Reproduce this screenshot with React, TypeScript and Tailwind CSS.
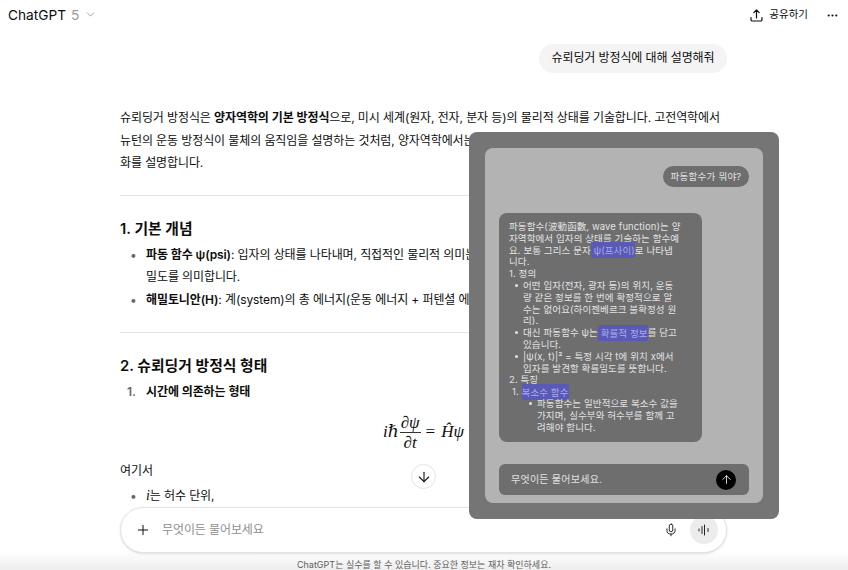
import { ChevronDown, MoreHorizontal, Plus, Mic, ArrowDown, ArrowUp } from "lucide-react";

const font = { fontFamily: '"Inter","Noto Sans CJK KR",sans-serif' };
const math = { fontFamily: '"Liberation Serif","DejaVu Serif",serif' };

function Hl({ children }: { children: React.ReactNode }) {
  return <span className="bg-[#5a5ab4] text-[#a8a8ee] py-[2.5px]">{children}</span>;
}

function Li({ children }: { children: React.ReactNode }) {
  return (
    <li className="flex">
      <span className="w-[14px] shrink-0 pl-[6px] pt-[4px]">
        <span className="block w-[3px] h-[3px] rounded-full bg-[#e2e2e2]" />
      </span>
      <span>{children}</span>
    </li>
  );
}

export default function App() {
  return (
    <div style={font} className="relative w-[848px] h-[570px] overflow-hidden bg-white flex flex-col text-[#0d0d0d]">
      <header className="h-[30px] shrink-0 flex items-center justify-between pl-[8px] pr-[9px]">
        <div className="flex items-center text-[13.7px] gap-[5px]">
          <span>ChatGPT</span>
          <span className="text-[#9b9b9b]">5</span>
          <ChevronDown size={13} strokeWidth={1.5} className="text-[#8f8f8f]" />
        </div>
        <div className="flex items-center">
          <svg width="15" height="15" viewBox="0 0 15 15" fill="none" stroke="#0d0d0d" strokeWidth="1.2" strokeLinecap="round" strokeLinejoin="round">
            <path d="M7.5 10V2M4.8 4.6 7.5 2l2.7 2.6M2 9.5v2.2c0 .8.6 1.3 1.3 1.3h8.4c.7 0 1.3-.5 1.3-1.3V9.5" />
          </svg>
          <span className="text-[10.5px] ml-[5px] mr-[18px]">공유하기</span>
          <MoreHorizontal size={13} strokeWidth={2} />
        </div>
      </header>

      <main className="flex-1 overflow-hidden">
        <div className="w-[607px] ml-[120px] text-[12px] tracking-[-0.1px] leading-[22.5px]">
          <div className="flex justify-end mt-[14px]">
            <div className="h-[29px] w-[188px] rounded-full bg-[#f4f4f4] flex items-center justify-center">슈뢰딩거 방정식에 대해 설명해줘</div>
          </div>
          <div className="mt-[34px] whitespace-nowrap">
            <p>슈뢰딩거 방정식은 <b className="font-semibold">양자역학의 기본 방정식</b>으로, 미시 세계(원자, 전자, 분자 등)의 물리적 상태를 기술합니다. 고전역학에서</p>
            <p>뉴턴의 운동 방정식이 물체의 움직임을 설명하는 것처럼, 양자역학에서는 슈뢰딩거 방정식이 시간 변</p>
            <p>화를 설명합니다.</p>
          </div>
          <hr className="border-[#e5e5e5] mt-[20px]" />
          <h2 className="text-[14.8px] tracking-normal font-semibold mt-[22px] leading-[22px]">1. 기본 개념</h2>
          <ul className="mt-[4px] whitespace-nowrap">
            <li className="flex">
              <span className="w-[26px] pl-[10px] text-[#666]">•</span>
              <div>
                <p><b className="font-semibold">파동 함수 ψ(psi)</b>: 입자의 상태를 나타내며, 직접적인 물리적 의미는 없지만 제곱은 확률</p>
                <p>밀도를 의미합니다.</p>
              </div>
            </li>
            <li className="flex">
              <span className="w-[26px] pl-[10px] text-[#666]">•</span>
              <p><b className="font-semibold">해밀토니안(H)</b>: 계(system)의 총 에너지(운동 에너지 + 퍼텐셜 에너지)를 나타냅니다.</p>
            </li>
          </ul>
          <hr className="border-[#e5e5e5] mt-[21px]" />
          <h2 className="text-[14.8px] tracking-normal font-semibold mt-[22px] leading-[22px]">2. 슈뢰딩거 방정식 형태</h2>
          <div className="flex mt-[4px] font-semibold">
            <span className="w-[26px] pl-[7px] text-[#666]">1.</span>
            <span>시간에 의존하는 형태</span>
          </div>
          <div style={math} className="flex items-center justify-center italic text-[17px] tracking-normal mt-[7px] h-[44px]">
            <span>iℏ</span>
            <span className="flex flex-col items-center mx-[1px] leading-[19px]">
              <span className="border-b border-[#333] px-[1px]">∂ψ</span>
              <span>∂t</span>
            </span>
            <span className="not-italic ml-[4px] mr-[6px]">=</span>
            <span>Ĥψ</span>
          </div>
          <p className="mt-[5px]">여기서</p>
          <div className="flex mt-[3px]">
            <span className="w-[26px] pl-[10px] text-[#666]">•</span>
            <p><i style={math} className="text-[14px]">i</i>는 허수 단위,</p>
          </div>
        </div>
      </main>

      <footer className="h-[63px] shrink-0 bg-gradient-to-b from-white from-70% to-[#eeeeee] relative">
        <div className="h-[46px] w-[607px] ml-[120px] rounded-full border border-[#e3e3e3] bg-white shadow-sm flex items-center pl-[14px] pr-[8px]">
          <Plus size={16} strokeWidth={1.5} />
          <span className="ml-[11px] text-[12px] tracking-[-0.1px] text-[#8f8f8f] flex-1">무엇이든 물어보세요</span>
          <Mic size={14} strokeWidth={1.5} />
          <div className="ml-[12px] w-[28px] h-[28px] rounded-full bg-[#ececec] flex items-center justify-center">
            <svg width="12" height="12" viewBox="0 0 12 12" stroke="#222" strokeWidth="1" strokeLinecap="round">
              <path d="M1 5v2M4 2.5v7M6.5 1v10M10 4.5v3" />
            </svg>
          </div>
        </div>
        <p className="text-center text-[9px] text-[#5d5d5d] mt-[4px] leading-[16px]">ChatGPT는 실수를 할 수 있습니다. 중요한 정보는 재차 확인하세요.</p>
      </footer>

      <button className="absolute left-[411px] top-[464px] w-[25px] h-[25px] rounded-full border border-[#e5e5e5] bg-white flex items-center justify-center">
        <ArrowDown size={16} strokeWidth={1.6} />
      </button>

      <div className="absolute left-[469px] top-[132px] w-[310px] h-[387px] rounded-[8px] bg-[#757575] p-[16px]">
        <div className="h-full rounded-[8px] bg-[#b3b3b3] px-[14px] pt-[18px] flex flex-col text-[9.5px] tracking-[0.1px] leading-[11.8px] text-[#e2e2e2]">
          <div className="self-end h-[21px] w-[86px] rounded-full bg-[#6e6e6e] flex items-center justify-center tracking-[0.25px]">파동함수가 뭐야?</div>
          <div className="mt-[26px] w-[203px] h-[229px] rounded-[8px] bg-[#6e6e6e] pl-[10px] pt-[8px] whitespace-nowrap">
            <p>파동함수(波動函數, wave function)는 양<br />자역학에서 입자의 상태를 기술하는 함수예<br />요. 보통 그리스 문자<Hl> ψ(프사이)</Hl>로 나타냅<br />니다.</p>
            <p>1. 정의</p>
            <ul>
              <Li>어떤 입자(전자, 광자 등)의 위치, 운동<br />량 같은 정보를 한 번에 확정적으로 알<br />수는 없어요(하이젠베르크 불확정성 원<br />리).</Li>
              <Li>대신 파동함수 ψ는<Hl> 확률적 정보</Hl>를 담고<br />있습니다.</Li>
              <Li>|ψ(x, t)|² = 특정 시각 t에 위치 x에서<br />입자를 발견할 확률밀도를 뜻합니다.</Li>
            </ul>
            <p>2. 특징</p>
            <p className="pl-[3px]">1. <Hl>복소수 함수</Hl></p>
            <ul className="pl-[14px]">
              <Li>파동함수는 일반적으로 복소수 값을<br />가지며, 실수부와 허수부를 함께 고<br />려해야 합니다.</Li>
            </ul>
          </div>
          <div className="mt-[22px] h-[31px] rounded-[6px] bg-[#6e6e6e] flex items-center justify-between pl-[12px] pr-[13px] text-[10px] tracking-[0.25px]">
            <span>무엇이든 물어보세요.</span>
            <div className="w-[20px] h-[20px] rounded-full bg-black flex items-center justify-center">
              <ArrowUp size={13} strokeWidth={1.5} className="text-white" />
            </div>
          </div>
        </div>
      </div>
    </div>
  );
}
